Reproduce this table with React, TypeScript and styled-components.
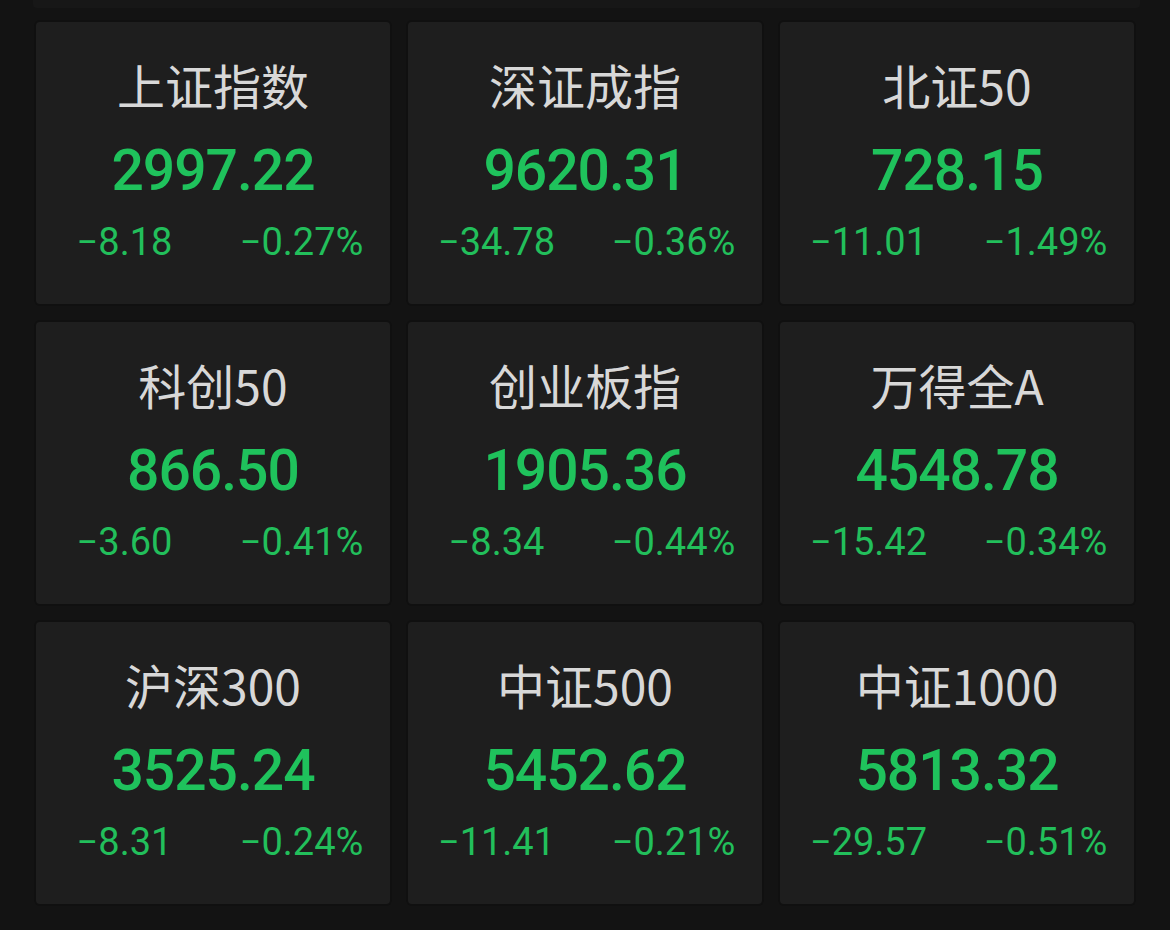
import styled, { createGlobalStyle } from 'styled-components';

type Quote = {
  name: string;
  value: string;
  change: string;
  percent: string;
};

const quotes: Quote[] = [
  { name: '上证指数', value: '2997.22', change: '−8.18', percent: '−0.27%' },
  { name: '深证成指', value: '9620.31', change: '−34.78', percent: '−0.36%' },
  { name: '北证50', value: '728.15', change: '−11.01', percent: '−1.49%' },
  { name: '科创50', value: '866.50', change: '−3.60', percent: '−0.41%' },
  { name: '创业板指', value: '1905.36', change: '−8.34', percent: '−0.44%' },
  { name: '万得全A', value: '4548.78', change: '−15.42', percent: '−0.34%' },
  { name: '沪深300', value: '3525.24', change: '−8.31', percent: '−0.24%' },
  { name: '中证500', value: '5452.62', change: '−11.41', percent: '−0.21%' },
  { name: '中证1000', value: '5813.32', change: '−29.57', percent: '−0.51%' },
];

export default function App() {
  return (
    <>
      <GlobalStyle />
      <Page>
        <TopEdge />
        <Grid>
          {quotes.map((q) => (
            <Card key={q.name}>
              <Name>{q.name}</Name>
              <Value>{q.value}</Value>
              <ChangeRow>
                <Change>{q.change}</Change>
                <Change>{q.percent}</Change>
              </ChangeRow>
            </Card>
          ))}
        </Grid>
      </Page>
    </>
  );
}

const GlobalStyle = createGlobalStyle`
  html, body {
    margin: 0;
    padding: 0;
    background: #131313;
  }
`;

const Page = styled.div`
  width: 1170px;
  height: 930px;
  background: #131313;
  overflow: hidden;
  font-family: Roboto, "Noto Sans CJK SC", sans-serif;
`;

const TopEdge = styled.div`
  height: 8px;
  margin: 0 30px 0 33px;
  background: #171717;
  border-radius: 0 0 4px 4px;
`;

const Grid = styled.div`
  display: grid;
  grid-template-columns: repeat(3, 354px);
  grid-auto-rows: 282px;
  gap: 18px;
  padding: 14px 36px 0;
`;

const Card = styled.div`
  display: flex;
  flex-direction: column;
  align-items: center;
  background: #1e1e1e;
  border-radius: 4px;
  box-shadow: 0 0 0 2px #101010;
  padding-top: 32px;
  box-sizing: border-box;
`;

const Name = styled.div`
  font-family: "Noto Sans CJK SC", Roboto, sans-serif;
  font-size: 48px;
  line-height: 60px;
  font-weight: 400;
  color: #d8d8d8;
`;

const Value = styled.div`
  margin-top: 22px;
  font-size: 57px;
  line-height: 70px;
  font-weight: 500;
  letter-spacing: -1px;
  color: #1fc25c;
`;

const ChangeRow = styled.div`
  display: flex;
  align-self: stretch;
  margin-top: 11px;
`;

const Change = styled.div`
  flex: 1;
  text-align: center;
  font-size: 38px;
  line-height: 50px;
  font-weight: 400;
  color: #22bf5b;
`;
